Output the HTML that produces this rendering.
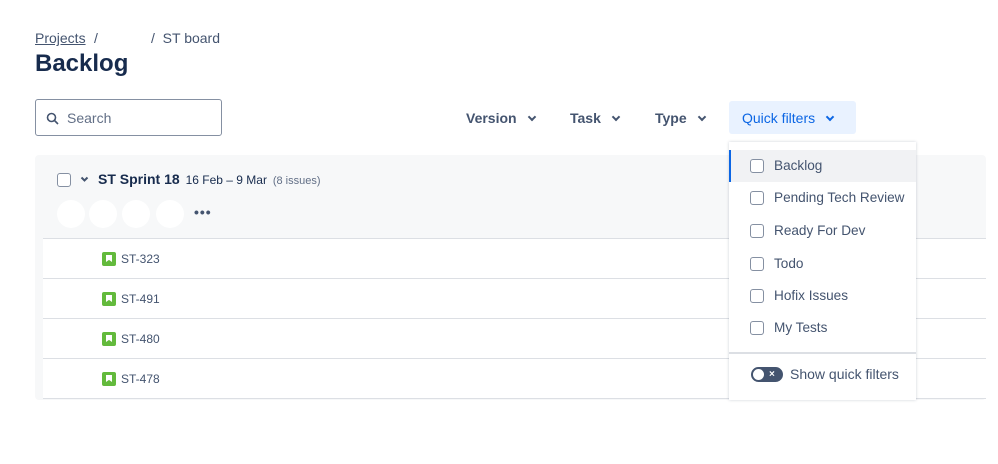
<!DOCTYPE html>
<html><head><meta charset="utf-8"><style>
*{box-sizing:border-box;margin:0;padding:0}
body{width:998px;height:464px;background:#fff;font-family:"Liberation Sans",sans-serif;color:#172b4d;position:relative;overflow:hidden}
.a{position:absolute}
.crumb{font-size:14px;color:#44546f;top:30px}
.cb{width:14px;height:14px;border:1.5px solid #8590a2;border-radius:3px;background:#fff}
.row{left:43px;width:943px;height:40px;background:#fff;border-bottom:1px solid #dcdfe4}
.icon{width:14px;height:14px;background:#63ba3c;border-radius:2px;left:59px;top:13px}
.icon:after{content:"";position:absolute;left:4px;top:3px;width:6px;height:7px;background:#fff;clip-path:polygon(0 0,100% 0,100% 100%,50% 70%,0 100%)}
.id{left:78px;top:13px;font-size:12px;color:#44546f}
.fl{font-size:14px;font-weight:bold;color:#44546f;top:110px}
.chev{display:inline-block;width:6px;height:6px;border-right:2px solid currentColor;border-bottom:2px solid currentColor;transform:rotate(45deg);margin-left:12px;position:relative;top:-3px}
.item{left:0;width:187px;height:32px;font-size:13.6px;color:#44546f}
.item .cb{position:absolute;left:21px;top:9px}
.item span{position:absolute;left:45px;top:8px}
.av{width:28px;height:28px;border-radius:50%;background:#fff;top:200px}
</style></head><body>
<div class="a crumb" style="left:35px;text-decoration:underline">Projects</div>
<div class="a crumb" style="left:94px">/</div>
<div class="a crumb" style="left:151px">/&nbsp; ST board</div>
<div class="a" style="left:35px;top:50px;font-size:24px;font-weight:bold;color:#172b4d">Backlog</div>
<div class="a" style="left:35px;top:99px;width:187px;height:37px;border:1px solid #8590a2;border-radius:3px">
<svg class="a" style="left:10px;top:12px" width="13" height="13" viewBox="0 0 13 13"><circle cx="5.5" cy="5.5" r="4" fill="none" stroke="#44546f" stroke-width="1.6"/><path d="M8.5 8.5L12 12" stroke="#44546f" stroke-width="1.6"/></svg>
<div class="a" style="left:31px;top:10px;font-size:14px;color:#626f86">Search</div></div>
<div class="a fl" style="left:466px">Version<span class="chev"></span></div>
<div class="a fl" style="left:570px">Task<span class="chev"></span></div>
<div class="a fl" style="left:655px">Type<span class="chev"></span></div>
<div class="a" style="left:729px;top:101px;width:127px;height:33px;background:#e9f2ff;border-radius:3px"></div>
<div class="a fl" style="left:742px;color:#0c66e4;font-weight:normal">Quick filters<span class="chev"></span></div>

<div class="a" style="left:35px;top:155px;width:951px;height:245px;background:#f7f8f9;border-radius:4px"></div>
<div class="a cb" style="left:57px;top:173px"></div>
<svg class="a" style="left:80px;top:176px" width="9" height="7" viewBox="0 0 9 7"><path d="M1.5 1.5L4.5 4.5L7.5 1.5" fill="none" stroke="#44546f" stroke-width="2"/></svg>
<div class="a" style="left:98px;top:171px;font-size:14px;font-weight:bold;color:#172b4d">ST Sprint 18 <span style="font-size:12px;font-weight:normal;color:#172b4d;margin-left:2px">16 Feb – 9 Mar</span> <span style="font-size:11px;font-weight:normal;color:#626f86;margin-left:2px">(8 issues)</span></div>
<div class="a av" style="left:57px"></div><div class="a av" style="left:89px"></div><div class="a av" style="left:122px"></div><div class="a av" style="left:156px"></div>
<div class="a" style="left:194px;top:204px;font-size:14px;font-weight:bold;color:#44546f;letter-spacing:1px">•••</div>
<div class="a" style="left:43px;top:238px;width:943px;height:1px;background:#dcdfe4"></div>
<div class="a row" style="top:239px"><div class="a icon"></div><div class="a id">ST-323</div></div>
<div class="a row" style="top:279px"><div class="a icon"></div><div class="a id">ST-491</div></div>
<div class="a row" style="top:319px"><div class="a icon"></div><div class="a id">ST-480</div></div>
<div class="a row" style="top:359px"><div class="a icon"></div><div class="a id">ST-478</div></div>

<div class="a" style="left:729px;top:142px;width:187px;height:258px;background:#fff;box-shadow:0 0 3px rgba(9,30,66,.2)">
<div class="a item" style="top:8px;background:#f1f2f4;box-shadow:inset 2px 0 0 #0c66e4"><div class="cb"></div><span>Backlog</span></div>
<div class="a item" style="top:40px"><div class="cb"></div><span>Pending Tech Review</span></div>
<div class="a item" style="top:73px"><div class="cb"></div><span>Ready For Dev</span></div>
<div class="a item" style="top:106px"><div class="cb"></div><span>Todo</span></div>
<div class="a item" style="top:138px"><div class="cb"></div><span>Hofix Issues</span></div>
<div class="a item" style="top:170px"><div class="cb"></div><span>My Tests</span></div>
<div class="a" style="left:0;top:210px;width:187px;height:2px;background:#dcdfe4"></div>
<div class="a" style="left:22px;top:225px;width:32px;height:15px;border-radius:8px;background:#44546f">
<div class="a" style="left:2px;top:2px;width:11px;height:11px;border-radius:50%;background:#fff"></div>
<div class="a" style="left:18px;top:0;font-size:10px;font-weight:bold;color:#fff;line-height:15px">×</div></div>
<div class="a" style="left:61px;top:224px;font-size:14px;color:#44546f">Show quick filters</div>
</div>
</body></html>
